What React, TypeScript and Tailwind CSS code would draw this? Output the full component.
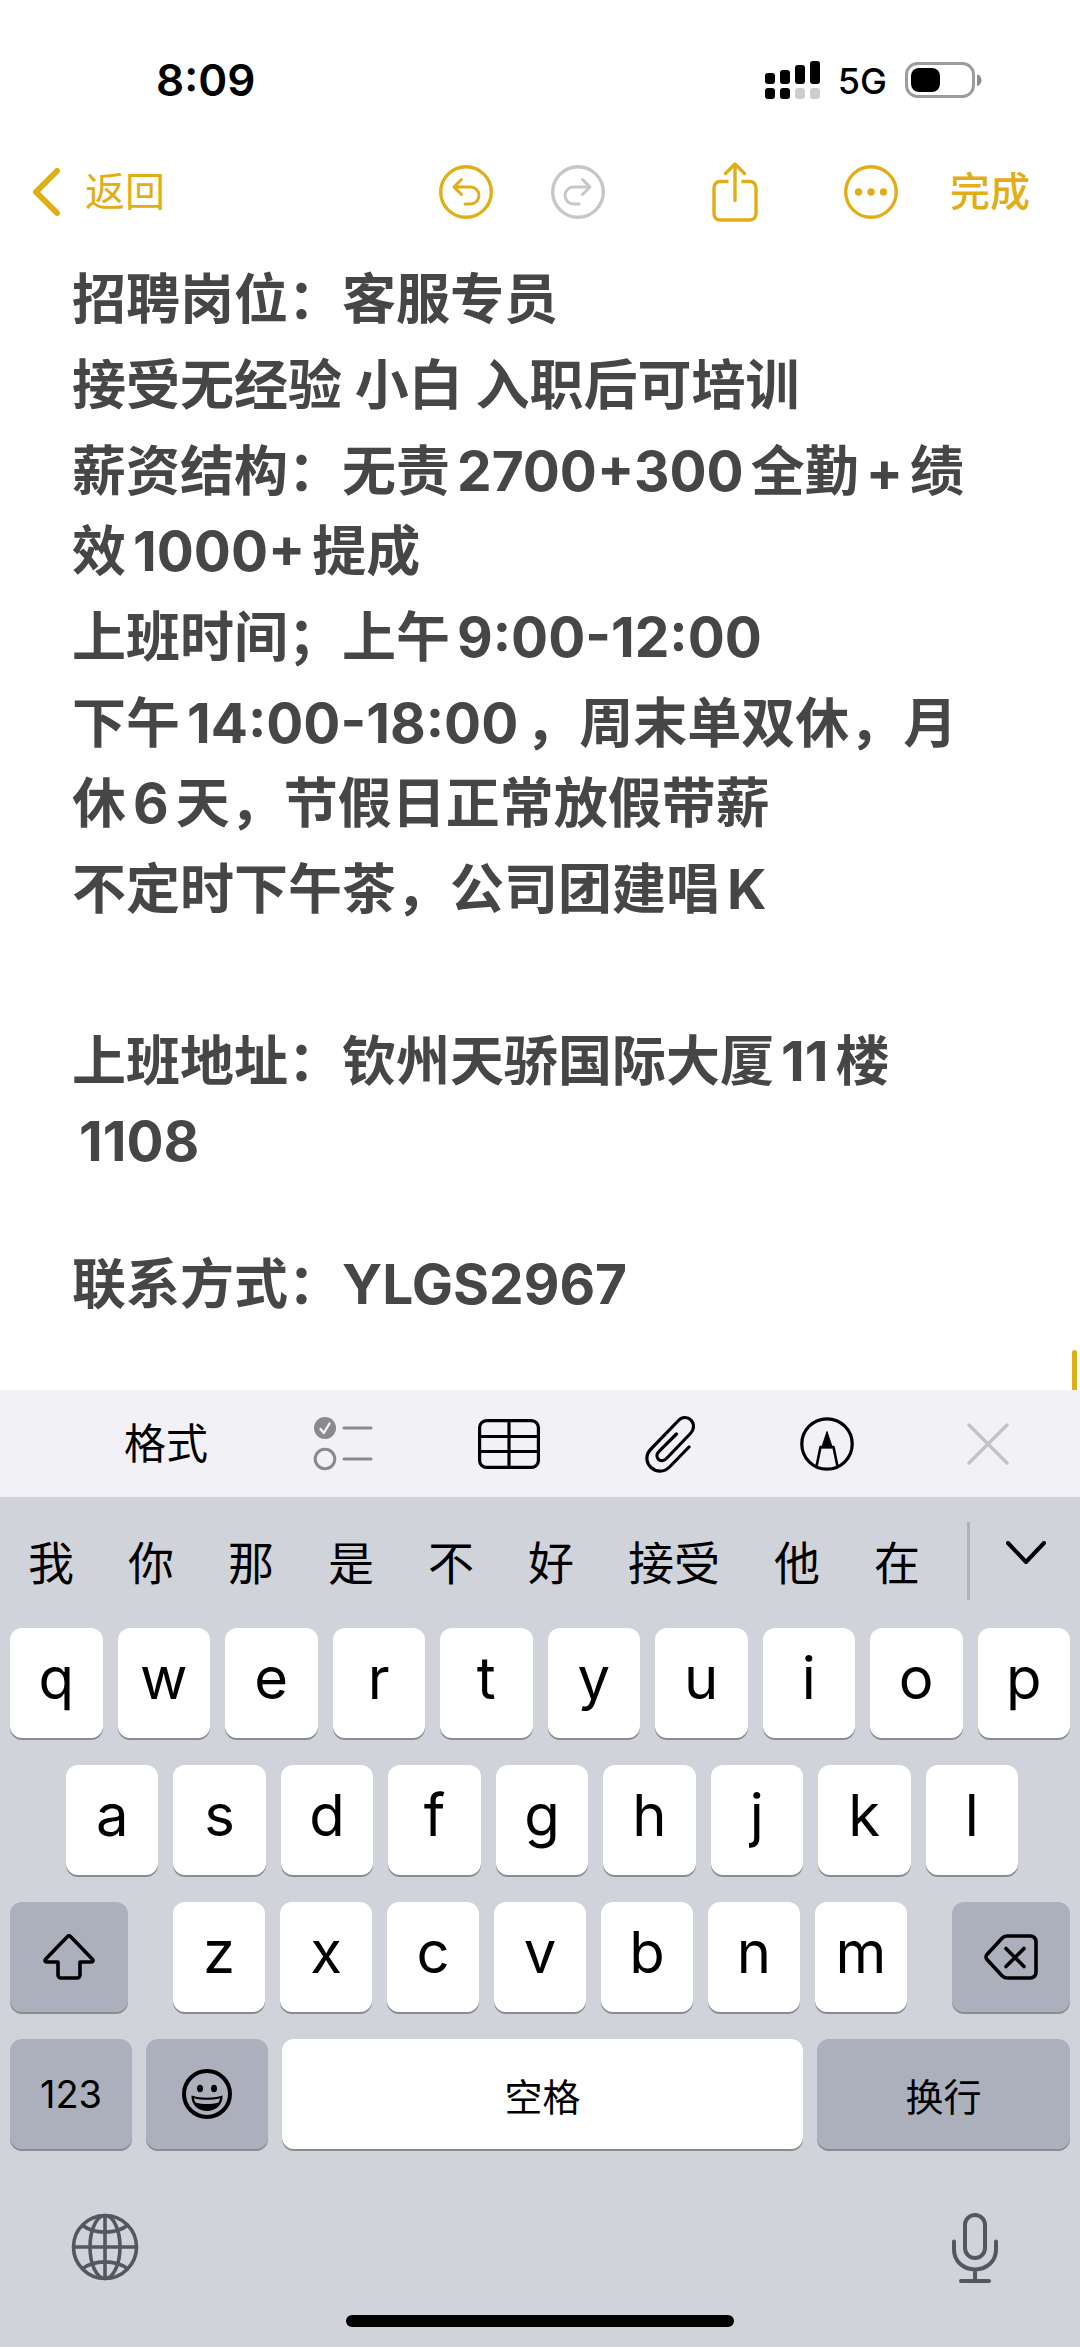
import { Fragment, type ReactNode } from 'react';
import clsx from 'clsx';

const rowOne = ['q', 'w', 'e', 'r', 't', 'y', 'u', 'i', 'o', 'p'];
const rowTwo = ['a', 's', 'd', 'f', 'g', 'h', 'j', 'k', 'l'];
const rowThree = ['z', 'x', 'c', 'v', 'b', 'n', 'm'];
const candidates = ['我', '你', '那', '是', '不', '好', '接受', '他', '在'];

function StatusBar() {
  return (
    <div className="flex h-32 items-center justify-between pt-8 pr-[98px] pl-[156px] text-black">
      <time className="text-[44px] leading-none font-semibold">8:09</time>
      <div className="flex items-center gap-[18px]">
        <svg width="55" height="38" viewBox="0 0 55 38" aria-hidden="true">
          <rect x="0" y="12" width="10" height="11" rx="3" />
          <rect x="15" y="9" width="10" height="14" rx="3" />
          <rect x="30" y="4" width="10" height="19" rx="3" />
          <rect x="45" y="0" width="10" height="23" rx="3" />
          <rect x="0" y="27" width="10" height="11" rx="3" />
          <rect x="15" y="27" width="10" height="11" rx="3" />
          <rect x="30" y="27" width="10" height="11" rx="3" fill="#cdcdcd" />
          <rect x="45" y="27" width="10" height="11" rx="3" fill="#cdcdcd" />
        </svg>
        <span className="pt-0.5 text-[36px] leading-none font-medium">5G</span>
        <svg width="77" height="37" viewBox="0 0 77 37" aria-hidden="true">
          <rect x="1.5" y="1.5" width="67" height="33" rx="11" fill="none" stroke="#9c9c9c" strokeWidth="3" />
          <rect x="6" y="6" width="29" height="24" rx="8" />
          <path d="M72 12.5c6 1.500 6 10 0 11.500z" fill="#8c8c8c" />
        </svg>
      </div>
    </div>
  );
}

function NavBar() {
  return (
    <nav className="flex h-32 items-center pr-[50px] pl-8 text-[40px] leading-none text-[#e2ae18]">
      <a href="#notes" className="flex items-center gap-6">
        <svg width="29" height="48" viewBox="0 0 29 48" fill="none" stroke="currentColor" strokeWidth="6" strokeLinecap="round" strokeLinejoin="round" aria-hidden="true">
          <path d="M25 3L4 24l21 21" />
        </svg>
        返回
      </a>
      <button type="button" aria-label="撤销" className="ml-auto">
        <svg width="54" height="54" viewBox="0 0 54 54" fill="none" stroke="currentColor" strokeWidth="3" strokeLinecap="round" strokeLinejoin="round">
          <circle cx="27" cy="27" r="25.300" strokeWidth="3.400" />
          <path d="M22.500 14.500L15 22l7.500 7.500M15 22h16.500a8.500 8.500 0 0 1 0 17H26" />
        </svg>
      </button>
      <button type="button" aria-label="重做" className="ml-[58px] text-[#c7c7c7]">
        <svg width="54" height="54" viewBox="0 0 54 54" fill="none" stroke="currentColor" strokeWidth="3" strokeLinecap="round" strokeLinejoin="round">
          <circle cx="27" cy="27" r="25.300" strokeWidth="3.400" />
          <path d="M31.500 14.500L39 22l-7.500 7.500M39 22H22.500a8.500 8.500 0 0 0 0 17H28" />
        </svg>
      </button>
      <button type="button" aria-label="分享" className="ml-[107px]">
        <svg width="46" height="60" viewBox="0 0 46 60" fill="none" stroke="currentColor" strokeWidth="3.400" strokeLinecap="round" strokeLinejoin="round">
          <path strokeLinecap="butt" d="M16.500 19.500H8a6 6 0 0 0-6 6V52a6 6 0 0 0 6 6h30a6 6 0 0 0 6-6V25.500a6 6 0 0 0-6-6h-8.500" />
          <path d="M23 38.500V3M13.500 11.500L23 2l9.500 9.500" />
        </svg>
      </button>
      <button type="button" aria-label="更多" className="ml-[86px]">
        <svg width="54" height="54" viewBox="0 0 54 54">
          <circle cx="27" cy="27" r="25.300" fill="none" stroke="currentColor" strokeWidth="3.400" />
          <circle cx="14.500" cy="27" r="3.700" fill="currentColor" />
          <circle cx="27" cy="27" r="3.700" fill="currentColor" />
          <circle cx="39.500" cy="27" r="3.700" fill="currentColor" />
        </svg>
      </button>
      <button type="button" className="ml-[52px] font-medium">完成</button>
    </nav>
  );
}

// Latin runs get a little air on both sides, as between Han characters and digits
function Latin({ children }: { children: ReactNode }) {
  return <span className="mx-[7px] text-[55px] leading-none">{children}</span>;
}

function Note() {
  return (
    <main className="relative flex-1 pt-1">
      <div
        role="textbox"
        aria-label="备忘录"
        aria-multiline="true"
        contentEditable
        suppressContentEditableWarning
        spellCheck={false}
        className="space-y-[6px] px-[72px] text-[54px] leading-[80px] font-bold text-[#464646] outline-none [text-spacing-trim:space-all]"
      >
        <p>招聘岗位：客服专员</p>
        <p>接受无经验 小白 入职后可培训</p>
        <p>
          薪资结构：无责<Latin>2700+300</Latin>全勤<Latin>+</Latin>绩<br />
          效<Latin>1000+</Latin>提成
        </p>
        <p>上班时间；上午<Latin>9:00-12:00</Latin></p>
        <p>
          下午<Latin>14:00-18:00</Latin>，周末单双休，月<br />
          休<Latin>6</Latin>天，节假日正常放假带薪
        </p>
        <p>不定时下午茶，公司团建唱<Latin>K</Latin></p>
        <p className="h-20" />
        <p>
          上班地址：钦州天骄国际大厦<Latin>11</Latin>楼<br />
          <Latin>1108</Latin>
        </p>
        <p className="h-[51px]" />
        <p>联系方式：<span className="text-[55px] leading-none">YLGS2967</span></p>
      </div>
      <span className="absolute right-[3px] bottom-0 h-10 w-[5px] rounded-t-sm bg-[#e2ae18]" />
    </main>
  );
}

function FormatBar() {
  return (
    <div className="flex h-[107px] items-center justify-between bg-[#f2f1f6] pr-[71px] pl-[124px] text-black">
      <button type="button" className="text-[42px] leading-none">格式</button>
      <button type="button" aria-label="核对清单" className="text-[#8a8a8d]">
        <svg width="60" height="56" viewBox="0 0 60 56" fill="none" stroke="currentColor" strokeWidth="3" strokeLinecap="round" strokeLinejoin="round">
          <circle cx="12" cy="12" r="11" fill="currentColor" stroke="none" />
          <path d="M7.500 13l3.300 4L16.500 7.500" stroke="#f2f1f6" strokeWidth="2.400" />
          <circle cx="12" cy="43" r="9.800" />
          <path d="M31 12h27M31 43h27" />
        </svg>
      </button>
      <button type="button" aria-label="表格">
        <svg width="62" height="50" viewBox="0 0 62 50" fill="none" stroke="currentColor" strokeWidth="3.200">
          <rect x="1.600" y="1.600" width="58.800" height="46.800" rx="7" />
          <path d="M31 2v46M2 17.500h58M2 32.500h58" />
        </svg>
      </button>
      <button type="button" aria-label="附件">
        <svg width="50" height="58" viewBox="0 0 50 58" fill="none" stroke="currentColor" strokeWidth="3.200" strokeLinecap="round" strokeLinejoin="round">
          <path d="M44 32L24.500 52c-5.500 5.500-13 5.500-18.500.500-5.500-5.500-5.500-13 0-18.500L33 6c4-4.500 9.500-4.500 13-.800 3.500 3.800 3.300 9.200-.600 13.300L21.500 43.500c-2.500 2.600-6 2.800-8 .800-2.200-2.200-2-5.500.500-8L31.500 19" />
        </svg>
      </button>
      <button type="button" aria-label="标记">
        <svg width="54" height="54" viewBox="0 0 54 54" fill="none" stroke="currentColor" strokeWidth="3.200" strokeLinejoin="round">
          <circle cx="27" cy="27" r="25.200" />
          <path d="M16.500 49.500l4-19.500h13l4 19.500" strokeWidth="2.600" />
          <path d="M27 14.500L32.500 31h-11z" fill="currentColor" strokeWidth="1" />
        </svg>
      </button>
      <button type="button" aria-label="关闭" className="ml-2 text-[#c4c4c7]">
        <svg width="42" height="42" viewBox="0 0 42 42" stroke="currentColor" strokeWidth="3.400" strokeLinecap="round">
          <path d="M2 2l38 38M40 2L2 40" />
        </svg>
      </button>
    </div>
  );
}

function Candidates() {
  return (
    <div className="flex h-[131px] items-center pr-[34px] pl-7 text-[46px] leading-none">
      <div className="flex gap-[54px]">
        {candidates.map((word) => (
          <button type="button" key={word}>{word}</button>
        ))}
      </div>
      <span className="mb-1 ml-auto h-[78px] w-[3px] bg-[#b1b3b8]" />
      <button type="button" aria-label="展开候选" className="ml-9 pb-5">
        <svg width="40" height="24" viewBox="0 0 40 24" fill="none" stroke="currentColor" strokeWidth="4" strokeLinecap="round" strokeLinejoin="round">
          <path d="M2 2l18 19L38 2" />
        </svg>
      </button>
    </div>
  );
}

interface KeyProps {
  children: ReactNode;
  label?: string;
  dark?: boolean;
  className?: string;
}

function Key({ children, label, dark, className }: KeyProps) {
  return (
    <button
      type="button"
      aria-label={label}
      className={clsx(
        'flex h-[110px] items-center justify-center rounded-xl text-[38px] leading-none shadow-[0_2px_0_#898b90]',
        dark ? 'bg-[#abb0bc]' : 'bg-white',
        className,
      )}
    >
      {children}
    </button>
  );
}

function LetterKeys({ letters }: { letters: string[] }) {
  return (
    <Fragment>
      {letters.map((letter) => (
        <Key key={letter} className="flex-1">
          <span className="pb-2.5 text-[58px]">{letter}</span>
        </Key>
      ))}
    </Fragment>
  );
}

function Keyboard() {
  return (
    <div className="bg-[#d0d3da] text-black">
      <Candidates />
      <div className="flex flex-col gap-[27px] px-[10px]">
        <div className="flex gap-[15px]">
          <LetterKeys letters={rowOne} />
        </div>
        <div className="flex gap-[15px] pr-[52px] pl-14">
          <LetterKeys letters={rowTwo} />
        </div>
        <div className="flex gap-[45px]">
          <Key dark label="上档" className="w-[118px]">
            <svg width="52" height="46" viewBox="0 0 52 46" fill="none" stroke="currentColor" strokeWidth="3.600" strokeLinejoin="round">
              <path d="M24.500 2.600L2.800 25c-1.500 1.700-.800 3 1 3H15v13a3 3 0 0 0 3 3h16a3 3 0 0 0 3-3V28h11.200c1.800 0 2.500-1.300 1-3L27.500 2.600a2 2 0 0 0-3 0z" />
            </svg>
          </Key>
          <div className="flex flex-1 gap-[15px]">
            <LetterKeys letters={rowThree} />
          </div>
          <Key dark label="删除" className="w-[118px]">
            <svg width="54" height="46" viewBox="0 0 54 46" fill="none" stroke="currentColor" strokeWidth="3.600" strokeLinecap="round" strokeLinejoin="round">
              <path d="M23 2h23.500a5.500 5.500 0 0 1 5.500 5.500v31a5.500 5.500 0 0 1-5.500 5.500H23a7 7 0 0 1-5-2.200L3 25.500a3.500 3.500 0 0 1 0-5L18 4.200A7 7 0 0 1 23 2z" />
              <path d="M22 14.500l18 18M40 14.500l-18 18" />
            </svg>
          </Key>
        </div>
        <div className="flex gap-[14px]">
          <Key dark className="w-[122px]">123</Key>
          <Key dark label="表情" className="w-[122px]">
            <svg width="50" height="50" viewBox="0 0 50 50">
              <circle cx="25" cy="25" r="23" fill="none" stroke="currentColor" strokeWidth="4" />
              <ellipse cx="18" cy="19.500" rx="3" ry="3.800" />
              <ellipse cx="32" cy="19.500" rx="3" ry="3.800" />
              <path d="M9.500 26.500c9.500 3 21.500 3 31 0 .500 9-6.500 15.500-15.500 15.500S9 35.500 9.500 26.500z" />
              <path d="M12 29.300c8 2 18 2 26 0-.300 2-.900 3.300-1.800 4.400-7 1.700-15.400 1.700-22.400 0-.900-1.100-1.500-2.400-1.800-4.400z" fill="#abb0bc" />
            </svg>
          </Key>
          <Key className="flex-1 pt-1.5">空格</Key>
          <Key dark className="w-[253px] pt-1.5">换行</Key>
        </div>
      </div>
      <div className="flex items-start justify-between pt-[64px] pr-[82px] pl-[71px] text-[#53575f]">
        <button type="button" aria-label="切换输入法">
          <svg width="68" height="68" viewBox="0 0 68 68" fill="none" stroke="currentColor" strokeWidth="3.600">
            <circle cx="34" cy="34" r="31.500" />
            <ellipse cx="34" cy="34" rx="15" ry="31.500" />
            <path d="M34 2.500v63M2.500 34h63M11 12c12 9.500 34 9.500 46 0M11 56c12-9.500 34-9.500 46 0" />
          </svg>
        </button>
        <button type="button" aria-label="听写">
          <svg width="46" height="70" viewBox="0 0 46 70" fill="none" stroke="currentColor" strokeWidth="4" strokeLinecap="round">
            <rect x="13" y="2" width="20" height="43" rx="10" />
            <path d="M2 28.500v8C2 48 11 56.500 23 56.500S44 48 44 36.500v-8M23 57v11M9 68h28" />
          </svg>
        </button>
      </div>
      <div className="px-[32%] pt-8 pb-5">
        <div className="h-3 rounded-full bg-black" />
      </div>
    </div>
  );
}

export default function App() {
  return (
    <div className="flex min-h-screen flex-col bg-white font-['Inter','Noto_Sans_CJK_SC',sans-serif]">
      <StatusBar />
      <NavBar />
      <Note />
      <FormatBar />
      <Keyboard />
    </div>
  );
}
